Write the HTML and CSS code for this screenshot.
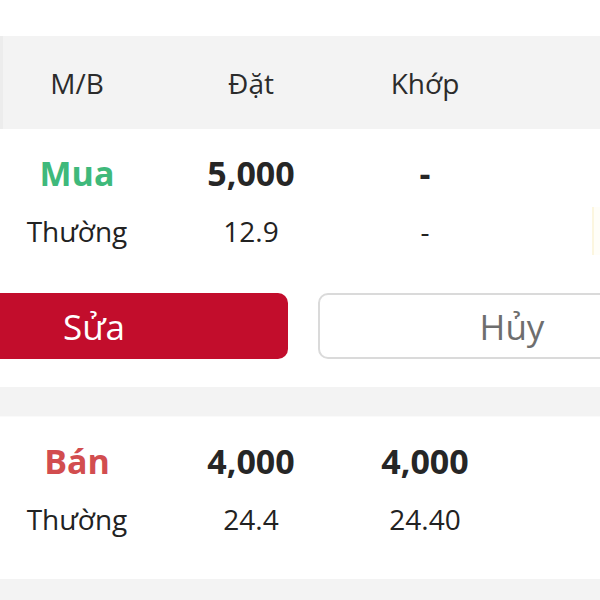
FILE: index.html
```html
<!DOCTYPE html>
<html lang="vi">
<head>
    <meta charset="UTF-8">
    <meta name="viewport" content="width=device-width, initial-scale=1.0">
    <title>Sổ lệnh</title>
    <link rel="stylesheet" href="styles.css">
</head>
<body>
    <section class="order-head">
        <div class="cols">
            <span>M/B</span>
            <span>Đặt</span>
            <span>Khớp</span>
            <span></span>
        </div>
    </section>

    <section class="order-card">
        <div class="cols main-row">
            <span class="side buy">Mua</span>
            <span>5,000</span>
            <span>-</span>
            <span></span>
        </div>
        <div class="cols sub-row">
            <span>Thường</span>
            <span>12.9</span>
            <span>-</span>
            <span class="tag-cell"><i class="tag"></i></span>
        </div>
        <div class="btn-box">
            <button class="btn btn-edit" type="button">Sửa</button>
            <button class="btn btn-cancel" type="button">Hủy</button>
        </div>
    </section>

    <div class="divider"></div>

    <section class="order-card done">
        <div class="cols main-row">
            <span class="side sell">Bán</span>
            <span>4,000</span>
            <span>4,000</span>
            <span></span>
        </div>
        <div class="cols sub-row">
            <span>Thường</span>
            <span>24.4</span>
            <span>24.40</span>
            <span></span>
        </div>
    </section>

    <div class="divider bottom"></div>
</body>
</html>
```

FILE: styles.css
```css
body {
    margin: 0;
    width: 600px;
    height: 600px;
    overflow: hidden;
    background-color: white;
    font-family: "Open Sans", "Noto Sans", sans-serif;
    color: #262626;
}

.cols {
    display: grid;
    grid-template-columns: repeat(4, 174px);
    margin-left: -10px;
    text-align: center;
}

.order-head {
    display: flex;
    align-items: center;
    height: 93px;
    margin-top: 36px;
    background-color: #f3f3f3;
    border-left: 3px solid #ececec;
    font-size: 28px;
    line-height: 38px;
    color: #2b2b2b;
}

.order-head .cols {
    margin-left: -13px;
}

.order-card {
    padding: 22px 0 28px 0;
}

.order-card.done {
    padding-bottom: 41px;
    border-top: 1px solid #fafafa;
    margin-top: -1px;
}

.main-row {
    font-size: 34px;
    line-height: 44px;
    font-weight: 700;
    color: #262626;
}

.side.buy {
    color: #3fb97b;
}

.side.sell {
    color: #d24d4f;
}

.sub-row {
    margin-top: 17px;
    font-size: 28px;
    line-height: 38px;
    color: #222;
}

.tag-cell {
    display: flex;
    align-items: center;
    height: 38px;
}

.tag {
    flex: none;
    width: 80px;
    height: 48px;
    margin-left: 80px;
    background-color: #fffef8;
    border-left: 2px solid #fcf6df;
}

.btn-box {
    display: flex;
    gap: 30px;
    margin: 43px 0 0 -100px;
}

.btn {
    flex: none;
    width: 388px;
    height: 66px;
    padding: 0;
    border-radius: 10px;
    font-family: "Open Sans", "Noto Sans", sans-serif;
    font-size: 35px;
}

.btn-edit {
    background-color: #c20d2c;
    border: 0;
    color: white;
}

.btn-cancel {
    background-color: white;
    border: 2px solid #dadada;
    color: #6e6e6e;
}

.divider {
    height: 30px;
    background-color: #f3f3f3;
}

.divider.bottom {
    height: 21px;
}
```
